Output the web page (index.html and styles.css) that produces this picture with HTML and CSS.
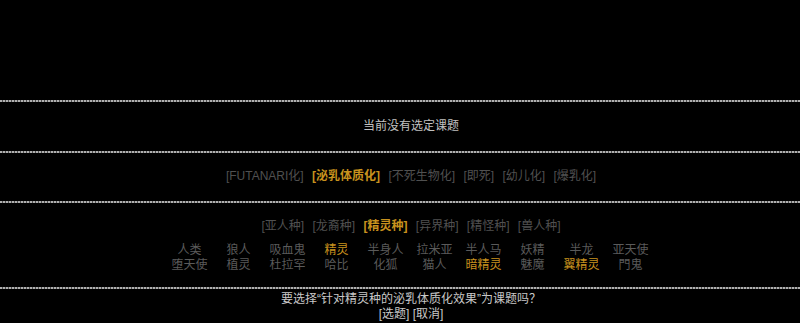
FILE: index.html
```html
<!DOCTYPE html>
<html lang="zh">
<head>
  <meta charset="UTF-8">
  <title>课题选择</title>
  <link rel="stylesheet" href="styles.css">
</head>
<body>
  <div class="screen">
    <div class="blank"></div>
    <div class="rule"></div>
    <div class="status">当前没有选定课题</div>
    <div class="rule"></div>
    <div class="row opts">
      <span class="opt">[FUTANARI化]</span>
      <span class="opt sel">[泌乳体质化]</span>
      <span class="opt">[不死生物化]</span>
      <span class="opt">[即死]</span>
      <span class="opt">[幼儿化]</span>
      <span class="opt">[爆乳化]</span>
    </div>
    <div class="rule"></div>
    <div class="row races">
      <span class="opt">[亚人种]</span>
      <span class="opt">[龙裔种]</span>
      <span class="opt sel">[精灵种]</span>
      <span class="opt">[异界种]</span>
      <span class="opt">[精怪种]</span>
      <span class="opt">[兽人种]</span>
    </div>
    <div class="grid">
      <span>人类</span><span>狼人</span><span>吸血鬼</span><span class="sel">精灵</span><span>半身人</span>
      <span>拉米亚</span><span>半人马</span><span>妖精</span><span>半龙</span><span>亚天使</span>
      <span>堕天使</span><span>植灵</span><span>杜拉罕</span><span>哈比</span><span>化狐</span>
      <span>猫人</span><span class="sel">暗精灵</span><span>魅魔</span><span class="sel">翼精灵</span><span>門鬼</span>
    </div>
    <div class="rule"></div>
    <div class="row prompt">要选择“针对精灵种的泌乳体质化效果”为课题吗？</div>
    <div class="row buttons"><span>[选题]</span> <span>[取消]</span></div>
  </div>
</body>
</html>
```

FILE: styles.css
```css
body {
  margin: 0;
  background: #000;
  color: #ccc;
  font-family: "Liberation Sans", "Noto Sans CJK SC", sans-serif;
  font-size: 12px;
  overflow: hidden;
}
.screen { width: 800px; }
.blank { height: 100px; }
.rule {
  height: 2px;
  background: repeating-linear-gradient(90deg, #b0b0b0 0 2px, #505050 2px 3px);
}
.row, .status {
  padding-left: 22px;
  text-align: center;
  white-space: nowrap;
}
.status {
  height: 49px;
  line-height: 49px;
  color: #c0c0c0;
}
.opts {
  height: 48px;
  line-height: 46px;
}
.opt { color: #505050; }
.opt + .opt { margin-left: 5px; }
.row .sel { color: #c8921e; font-weight: bold; }
.races {
  padding-top: 14px;
  line-height: 18px;
}
.grid {
  display: grid;
  grid-template-columns: repeat(10, 49px);
  justify-content: center;
  padding: 8px 0 14px 20px;
  line-height: 15px;
  color: #5a5a5a;
  text-align: center;
}
.grid .sel { color: #c8921e; }
.prompt {
  padding-top: 3px;
  line-height: 15px;
  color: #c8c8c8;
}
.buttons {
  line-height: 14px;
  color: #c8c8c8;
}
```
